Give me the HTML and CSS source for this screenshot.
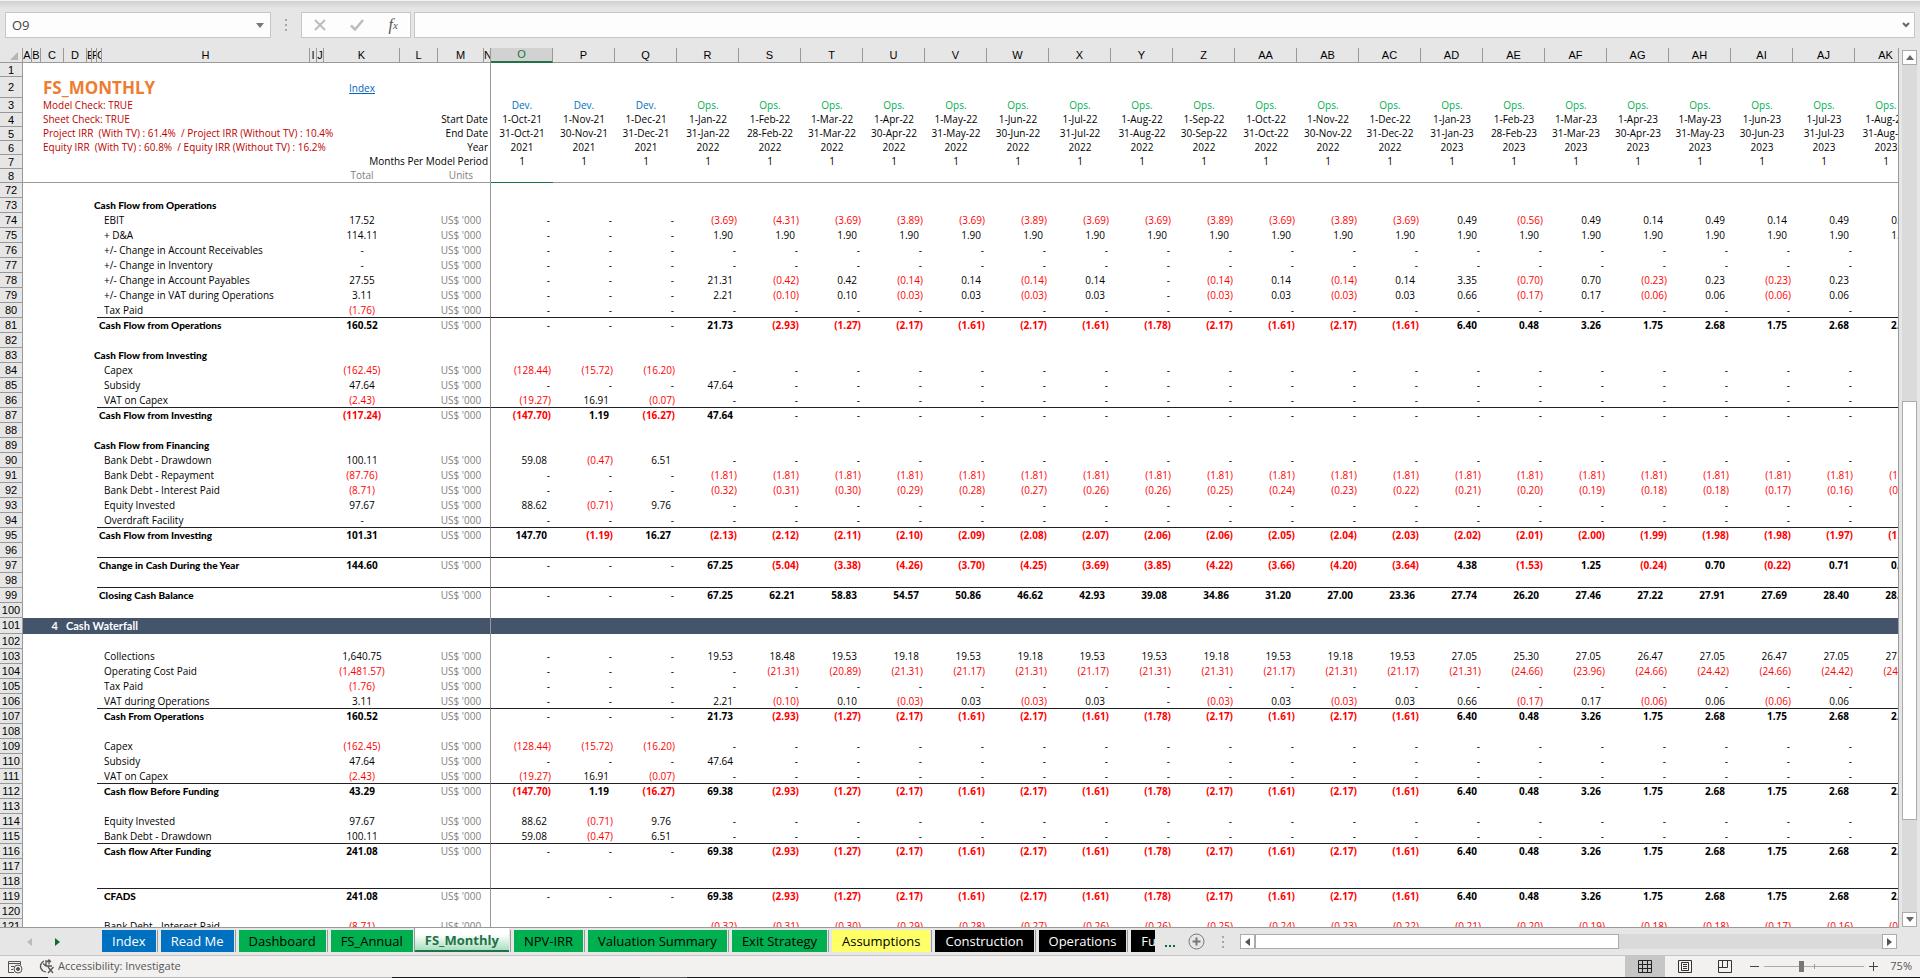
FILE: index.html
```html
<!DOCTYPE html>
<html lang="en">
<head>
    <meta charset="UTF-8">
    <meta name="viewport" content="width=device-width, initial-scale=1.0">
    <title>FS_Monthly</title>
    <link rel="stylesheet" href="styles.css">
</head>
<body>
    <div class="formula-bar">
        <div class="name-box">
            <input type="text" value="O9" aria-label="Name box">
            <svg width="8" height="5" viewBox="0 0 8 5"><path d="M0 0h8L4 5z" fill="#777"/></svg>
        </div>
        <span class="grip"><i></i><i></i><i></i></span>
        <div class="fx-buttons">
            <button type="button" aria-label="Cancel">
                <svg width="12" height="12" viewBox="0 0 12 12"><path d="M1 1l10 10M11 1L1 11" stroke="#bdbdbd" stroke-width="2" fill="none"/></svg>
            </button>
            <button type="button" aria-label="Enter">
                <svg width="14" height="12" viewBox="0 0 14 12"><path d="M1 6.500l4 4L13 1" stroke="#bdbdbd" stroke-width="2.500" fill="none"/></svg>
            </button>
            <button type="button" class="fx" aria-label="Insert function">f<sub>x</sub></button>
        </div>
        <div class="formula-input">
            <input type="text" aria-label="Formula">
            <svg width="8" height="6" viewBox="0 0 8 6"><path d="M1 1l3 3 3-3" stroke="#666" stroke-width="2" fill="none"/></svg>
        </div>
    </div>

    <div class="workspace">
        <div class="sheet">
            <table id="grid">
                <colgroup id="cols"></colgroup>
                <thead id="head"></thead>
                <tbody id="body"></tbody>
            </table>
        </div>
        <div class="vscroll">
            <button type="button" aria-label="Scroll up"><svg width="8" height="5" viewBox="0 0 8 5"><path d="M0 5h8L4 0z" fill="#666"/></svg></button>
            <div class="vtrack"><div class="vthumb"></div></div>
            <button type="button" aria-label="Scroll down"><svg width="8" height="5" viewBox="0 0 8 5"><path d="M0 0h8L4 5z" fill="#666"/></svg></button>
        </div>
    </div>

    <div class="tab-bar">
        <div class="tab-nav">
            <button type="button" aria-label="Previous sheet"><svg width="5" height="8" viewBox="0 0 5 8"><path d="M5 0v8L0 4z" fill="#bbb"/></svg></button>
            <button type="button" aria-label="Next sheet"><svg width="5" height="8" viewBox="0 0 5 8"><path d="M0 0v8l5-4z" fill="#0e6b38"/></svg></button>
        </div>
        <div class="tabs">
            <button type="button" class="tab blue">Index</button>
            <button type="button" class="tab blue">Read Me</button>
            <button type="button" class="tab green">Dashboard</button>
            <button type="button" class="tab green">FS_Annual</button>
            <button type="button" class="tab active">FS_Monthly</button>
            <button type="button" class="tab green">NPV-IRR</button>
            <button type="button" class="tab green">Valuation Summary</button>
            <button type="button" class="tab green">Exit Strategy</button>
            <button type="button" class="tab yellow">Assumptions</button>
            <button type="button" class="tab black">Construction</button>
            <button type="button" class="tab black">Operations</button>
            <button type="button" class="tab black">Funding</button>
        </div>
        <button type="button" class="more" aria-label="More sheets"><i></i><i></i><i></i></button>
        <button type="button" class="add" aria-label="New sheet">
            <svg width="17" height="17" viewBox="0 0 17 17"><circle cx="8.500" cy="8.500" r="7.500" fill="none" stroke="#777"/><path d="M8.500 4.500v8M4.500 8.500h8" stroke="#777" stroke-width="2"/></svg>
        </button>
        <span class="grip"><i></i><i></i><i></i></span>
        <div class="hscroll">
            <button type="button" aria-label="Scroll left"><svg width="5" height="8" viewBox="0 0 5 8"><path d="M5 0v8L0 4z" fill="#555"/></svg></button>
            <div class="htrack"><div class="hthumb"></div></div>
            <button type="button" aria-label="Scroll right"><svg width="5" height="8" viewBox="0 0 5 8"><path d="M0 0v8l5-4z" fill="#555"/></svg></button>
        </div>
    </div>

    <div class="status-bar">
        <svg class="macro" width="15" height="14" viewBox="0 0 15 14" fill="none" stroke="#555"><path d="M6 12.500H.500v-11h12V5M.500 3.500h12M3 6.500h3M3 9.500h2"/><circle cx="10" cy="9" r="4"/><circle cx="10" cy="9" r="1.500" fill="#555"/></svg>
        <svg class="access" width="16" height="15" viewBox="0 0 16 15" fill="none" stroke="#555" stroke-width="1.300"><path d="M5 2C1 4 0 9 4 12l3 1M7 1v6M4 4.500l3 2.500h6M10 1.500v4M9 8l5 6M14.500 8L9 14M8 3l2-2 2 2"/></svg>
        <span class="status-text">Accessibility: Investigate</span>
        <div class="views">
            <button type="button" class="on" aria-label="Normal view"><svg width="14" height="13" viewBox="0 0 14 13" fill="none" stroke="#222"><path d="M.500.500h13v12H.500zM.500 4.500h13M.500 8.500h13M4.500.500v12M9.500.500v12"/></svg></button>
            <button type="button" aria-label="Page layout"><svg width="14" height="13" viewBox="0 0 14 13" fill="none" stroke="#333"><path d="M.500.500h13v12H.500zM3.500 2.500h7v8h-7zM5 4.500h4M5 6.500h4M5 8.500h4"/></svg></button>
            <button type="button" aria-label="Page break preview"><svg width="14" height="13" viewBox="0 0 14 13" fill="none" stroke="#333"><path d="M.500.500h13v12H.500zM.500 7.500h9M4.500.500v7M9.500.500v7"/></svg></button>
        </div>
        <button type="button" class="zoom-step" aria-label="Zoom out"><svg width="9" height="9" viewBox="0 0 9 9"><path d="M0 4.500h9" stroke="#444"/></svg></button>
        <input type="range" class="zoom" min="0" max="100" value="37" aria-label="Zoom">
        <button type="button" class="zoom-step" aria-label="Zoom in"><svg width="9" height="9" viewBox="0 0 9 9"><path d="M0 4.500h9M4.500 0v9" stroke="#444"/></svg></button>
        <span class="zoom-value">75%</span>
    </div>
    <div class="taskbar-edge"></div>

    <script src="script.js"></script>
</body>
</html>
```
FILE: styles.css
```css
* {
    box-sizing: border-box;
}

body {
    margin: 0;
    height: 100vh;
    display: flex;
    flex-direction: column;
    overflow: hidden;
    background: #e6e6e6;
    color: #000;
    font-family: "Open Sans", "Liberation Sans", sans-serif;
    font-size: 10px;
}

button {
    padding: 0;
    border: none;
    background: none;
    font-family: inherit;
    display: flex;
    align-items: center;
    justify-content: center;
}

/* formula bar */
.formula-bar {
    flex: none;
    display: flex;
    height: 48px;
    padding: 12px 5px 10px;
    background: linear-gradient(#f3f3f3 1px, #cfd0cf 1px, #e6e6e6 9px);
}

.name-box,
.fx-buttons,
.formula-input {
    display: flex;
    align-items: center;
    background: #fdfdfd;
    border: 1px solid #c6c6c6;
}

.name-box {
    width: 266px;
    padding-right: 6px;
}

.name-box input,
.formula-input input {
    flex: 1;
    min-width: 0;
    padding: 0 6px;
    border: none;
    outline: none;
    background: none;
    color: #444;
    font-family: inherit;
    font-size: 13px;
}

.grip {
    display: flex;
    flex-direction: column;
    align-items: center;
    justify-content: center;
    gap: 3px;
    width: 30px;
}

.grip i {
    width: 2px;
    height: 2px;
    background: #a6a6a6;
}

.fx-buttons {
    width: 110px;
    justify-content: space-around;
    margin-right: 3px;
}

.fx {
    color: #555;
    font-family: "Liberation Serif", serif;
    font-size: 16px;
    font-style: italic;
}

.fx sub {
    font-size: 11px;
}

.formula-input {
    flex: 1;
    padding-right: 4px;
}

/* grid */
.workspace {
    flex: 1;
    min-height: 0;
    display: flex;
}

.sheet {
    flex: 1;
    min-width: 0;
    overflow: hidden;
    background: #fff;
    border-right: 1px solid #999;
    border-bottom: 1px solid #999;
}

table {
    table-layout: fixed;
    border-collapse: separate;
    border-spacing: 0;
    width: 0;
}

th {
    padding: 0;
    overflow: hidden;
    background: #e6e6e6;
    font-family: "Liberation Sans", sans-serif;
    font-size: 11px;
    font-weight: normal;
    line-height: 13px;
    border-right: 1px solid #999;
    border-bottom: 1px solid #999;
}

thead th {
    height: 15px;
}

thead th.selected {
    background: #d2d2d2;
    color: #217346;
    border-bottom: 2px solid #217346;
}

.corner svg {
    display: block;
    margin: 2px 4px 0 auto;
}

td {
    height: 15px;
    padding: 0 2px;
    line-height: 14px;
    white-space: nowrap;
    text-align: center;
    vertical-align: top;
}

.short td {
    height: 14px;
    line-height: 13px;
}

.short th {
    line-height: 12px;
}

.title td {
    height: 21px;
    line-height: 20px;
    vertical-align: bottom;
}

.band td {
    height: 16px;
    background: #44546a;
    color: #fff;
    font-family: Lato, "Open Sans", sans-serif;
    font-size: 11px;
    font-weight: bold;
    line-height: 16px;
}

td.edge {
    border-right: 1px solid #999;
}

.frozen td {
    border-bottom: 1px solid #999;
}

.frozen td.selected {
    border-bottom-color: #217346;
}

.left {
    text-align: left;
}

.right {
    text-align: right;
}

.indent {
    padding-left: 7px;
}

.band .right {
    padding-right: 6px;
}

h1 {
    margin: 0;
    color: #ed7d31;
    font-size: 17px;
    line-height: 20px;
}

.check {
    color: #c00000;
}

.muted {
    color: #808080;
}

.dev {
    color: #0070c0;
}

.ops {
    color: #00b050;
}

td a {
    color: #0563c1;
}

.num {
    text-align: right;
    padding-right: 6px;
}

.neg {
    color: #f00;
}

.num.neg {
    padding-right: 2px;
}

.num.nil {
    padding-right: 3px;
}

.bold .value {
    font-weight: bold;
}

.bold .nil {
    font-weight: normal;
}

.bold .label {
    font-family: Lato, "Open Sans", sans-serif;
    font-weight: 900;
}

.ruled .line {
    border-bottom: 1px solid #222;
}

/* scroll bars */
.vscroll {
    flex: none;
    display: flex;
    flex-direction: column;
    width: 21px;
    padding: 2px 3px 1px;
}

.vscroll button,
.hscroll button {
    flex: none;
    width: 15px;
    height: 15px;
    background: #fff;
    border: 1px solid #ababab;
}

.vtrack {
    flex: 1;
    display: grid;
    grid-template-rows: 336fr 419fr 92fr;
    background: #dadada;
}

.vthumb {
    grid-row: 2;
    background: #fff;
    border: 1px solid #ababab;
}

/* sheet tabs */
.tab-bar {
    flex: none;
    display: flex;
    align-items: center;
    height: 27px;
    padding-right: 23px;
}

.tab-nav {
    display: flex;
    justify-content: space-between;
    width: 99px;
    padding: 0 39px 0 27px;
}

.tabs {
    display: flex;
    align-items: flex-start;
    width: 1056px;
    height: 27px;
    overflow: hidden;
}

.tab {
    flex: none;
    height: 22px;
    margin: 2px 2px 0 0;
    padding: 0 10px 1px;
    border-left: 3px solid #e6e6e6;
    font-size: 13px;
    box-shadow: -1px 0 #999;
    color: #000;
}

.blue {
    background: #0070c0;
    color: #fff;
}

.green {
    background: #00b050;
}

.yellow {
    background: #ff6;
}

.black {
    background: #000;
    color: #fff;
}

.active {
    height: 24px;
    margin-top: 0;
    padding-top: 2px;
    padding-bottom: 0;
    border-left: none;
    border-bottom: 2px solid #217346;
    background: linear-gradient(#fff 30%, #a9dfbf);
    color: #217346;
    font-weight: bold;
}

.more {
    gap: 2px;
    width: 29px;
    height: 10px;
    align-items: flex-end;
}

.more i {
    width: 2px;
    height: 2px;
    background: #0e6b38;
}

.add {
    width: 24px;
}

.hscroll {
    flex: 1;
    display: flex;
    margin-left: 2px;
}

.htrack {
    flex: 1;
    background: #dadada;
}

.hthumb {
    width: 58%;
    height: 15px;
    background: #fff;
    border: 1px solid #ababab;
}

/* status bar */
.status-bar {
    flex: none;
    display: flex;
    align-items: center;
    height: 22px;
    padding: 0 8px;
    background: #f3f1f0;
    border-top: 1px solid #c6c6c6;
    color: #555;
    font-size: 11px;
}

.status-text {
    padding-bottom: 2px;
}

.access {
    margin: 0 3px 0 16px;
}

.views {
    display: flex;
    margin-left: auto;
    margin-right: 5px;
}

.views button {
    width: 40px;
    height: 21px;
}

.views .on {
    background: #c6c6c6;
}

.zoom-step {
    width: 9px;
}

.zoom {
    appearance: none;
    width: 100px;
    height: 11px;
    margin: 0 5px;
    background: linear-gradient(#999, #999) 50% 50% / 1px 5px no-repeat, linear-gradient(#aaa, #aaa) 0 50% / 100% 1px no-repeat;
}

.zoom::-webkit-slider-thumb {
    appearance: none;
    width: 5px;
    height: 11px;
    background: #777;
}

.zoom-value {
    width: 34px;
    padding-bottom: 2px;
    text-align: right;
}

.taskbar-edge {
    flex: none;
    height: 1px;
    background: linear-gradient(90deg, #1a1a1a 48px, #b5b5b5 48px, #b5b5b5 392px, #1a1a1a 392px, #1a1a1a 640px, #555 640px, #555 687px, #1a1a1a 687px);
}
```
FILE: script.js
```js
const columns = [
    ["A", 9], ["B", 9], ["C", 23], ["D", 23], ["E", 5], ["F", 5], ["G", 5], ["H", 208],
    ["I", 7], ["J", 7], ["K", 76], ["L", 38], ["M", 46], ["N", 7]
];
const periods = "O P Q R S T U V W X Y Z AA AB AC AD AE AF AG AH AI AJ AK".split(" ");
periods.forEach(name => columns.push([name, 62]));

const months = ["Jan", "Feb", "Mar", "Apr", "May", "Jun", "Jul", "Aug", "Sep", "Oct", "Nov", "Dec"];
const dates = periods.map((name, i) => {
    const month = (9 + i) % 12;
    const year = 2021 + Math.floor((9 + i) / 12);
    return { month: months[month], year: year, last: new Date(year, month + 1, 0).getDate() };
});

const none = "- ".repeat(23);
const dash20 = " -".repeat(20);
const cashOps = "- - - 21.73 (2.93) (1.27) (2.17) (1.61) (2.17) (1.61) (1.78) (2.17) (1.61) (2.17) (1.61) 6.40 0.48 3.26 1.75 2.68 1.75 2.68 2.51";
const cashFunded = cashOps.replace("21.73", "69.38");
const vat = "- - - 2.21 (0.10) 0.10 (0.03) 0.03 (0.03) 0.03 - (0.03) 0.03 (0.03) 0.03 0.66 (0.17) 0.17 (0.06) 0.06 (0.06) 0.06 -";
const interest = "- - - (0.32) (0.31) (0.30) (0.29) (0.28) (0.27) (0.26) (0.26) (0.25) (0.24) (0.23) (0.22) (0.21) (0.20) (0.19) (0.18) (0.18) (0.17) (0.16) (0.15)";
const capex = "(128.44) (15.72) (16.20)" + dash20;
const subsidy = "- - - 47.64" + " -".repeat(19);
const vatCapex = "(19.27) 16.91 (0.07)" + dash20;
const equity = "88.62 (0.71) 9.76" + dash20;
const drawdown = "59.08 (0.47) 6.51" + dash20;

// row number, style, label, total, values
const rows = [
    [72],
    [73, "heading", "Cash Flow from Operations"],
    [74, "", "EBIT", "17.52", "- - - (3.69) (4.31) (3.69) (3.89) (3.69) (3.89) (3.69) (3.69) (3.89) (3.69) (3.89) (3.69) 0.49 (0.56) 0.49 0.14 0.49 0.14 0.49 0.49"],
    [75, "", "+ D&A", "114.11", "- - -" + " 1.90".repeat(20)],
    [76, "", "+/- Change in Account Receivables", "-", none],
    [77, "", "+/- Change in Inventory", "-", none],
    [78, "", "+/- Change in Account Payables", "27.55", "- - - 21.31 (0.42) 0.42 (0.14) 0.14 (0.14) 0.14 - (0.14) 0.14 (0.14) 0.14 3.35 (0.70) 0.70 (0.23) 0.23 (0.23) 0.23 -"],
    [79, "", "+/- Change in VAT during Operations", "3.11", vat],
    [80, "ruled", "Tax Paid", "(1.76)", none],
    [81, "total", "Cash Flow from Operations", "160.52", cashOps],
    [82],
    [83, "heading", "Cash Flow from Investing"],
    [84, "", "Capex", "(162.45)", capex],
    [85, "", "Subsidy", "47.64", subsidy],
    [86, "ruled", "VAT on Capex", "(2.43)", vatCapex],
    [87, "total", "Cash Flow from Investing", "(117.24)", "(147.70) 1.19 (16.27) 47.64" + " -".repeat(19)],
    [88],
    [89, "heading", "Cash Flow from Financing"],
    [90, "", "Bank Debt - Drawdown", "100.11", drawdown],
    [91, "", "Bank Debt - Repayment", "(87.76)", "- - -" + " (1.81)".repeat(20)],
    [92, "", "Bank Debt - Interest Paid", "(8.71)", interest],
    [93, "", "Equity Invested", "97.67", equity],
    [94, "ruled", "Overdraft Facility", "-", none],
    [95, "total", "Cash Flow from Investing", "101.31", "147.70 (1.19) 16.27 (2.13) (2.12) (2.11) (2.10) (2.09) (2.08) (2.07) (2.06) (2.06) (2.05) (2.04) (2.03) (2.02) (2.01) (2.00) (1.99) (1.98) (1.98) (1.97) (1.96)"],
    [96, "ruled"],
    [97, "total", "Change in Cash During the Year", "144.60", "- - - 67.25 (5.04) (3.38) (4.26) (3.70) (4.25) (3.69) (3.85) (4.22) (3.66) (4.20) (3.64) 4.38 (1.53) 1.25 (0.24) 0.70 (0.22) 0.71 0.54"],
    [98, "ruled"],
    [99, "total", "Closing Cash Balance", "", "- - - 67.25 62.21 58.83 54.57 50.86 46.62 42.93 39.08 34.86 31.20 27.00 23.36 27.74 26.20 27.46 27.22 27.91 27.69 28.40 28.94"],
    [100],
    [101, "band", "Cash Waterfall"],
    [102],
    [103, "", "Collections", "1,640.75", "- - - 19.53 18.48 19.53 19.18 19.53 19.18 19.53 19.53 19.18 19.53 19.18 19.53 27.05 25.30 27.05 26.47 27.05 26.47 27.05 27.05"],
    [104, "", "Operating Cost Paid", "(1,481.57)", "- - - - (21.31) (20.89) (21.31) (21.17) (21.31) (21.17) (21.31) (21.31) (21.17) (21.31) (21.17) (21.31) (24.66) (23.96) (24.66) (24.42) (24.66) (24.42) (24.66)"],
    [105, "", "Tax Paid", "(1.76)", none],
    [106, "ruled", "VAT during Operations", "3.11", vat],
    [107, "subtotal", "Cash From Operations", "160.52", cashOps],
    [108],
    [109, "", "Capex", "(162.45)", capex],
    [110, "", "Subsidy", "47.64", subsidy],
    [111, "ruled", "VAT on Capex", "(2.43)", vatCapex],
    [112, "subtotal", "Cash flow Before Funding", "43.29", cashFunded.replace("- - -", "(147.70) 1.19 (16.27)")],
    [113],
    [114, "", "Equity Invested", "97.67", equity],
    [115, "ruled", "Bank Debt - Drawdown", "100.11", drawdown],
    [116, "subtotal", "Cash flow After Funding", "241.08", cashFunded],
    [117],
    [118, "ruled"],
    [119, "subtotal", "CFADS", "241.08", cashFunded],
    [120],
    [121, "", "Bank Debt - Interest Paid", "(8.71)", interest]
];

function sign(value) {
    if (value === "-") return "nil";
    return value.startsWith("(") ? "neg" : "";
}

function cells(render) {
    return dates.map(render).join("");
}

function headerRow(number, cls, left, render) {
    return `<tr class="${cls}"><th scope="row">${number}</th>${left}${cells(render)}</tr>`;
}

function check(text) {
    return `<td colspan="2"></td><td colspan="8" class="left check">${text}</td>`;
}

function caption(text) {
    return `<td colspan="4" class="right edge">${text}</td>`;
}

function dataRow([number, style = "", label = "", total = "", values = ""]) {
    const th = `<th scope="row">${number}</th>`;
    if (style === "band") {
        return `<tr class="band">${th}<td colspan="2"></td><td class="right">4</td><td colspan="10" class="left">${label}</td><td class="edge"></td>${cells(() => "<td></td>")}</tr>`;
    }
    if (style === "heading") {
        return `<tr class="bold">${th}<td colspan="5"></td><td colspan="8" class="left label">${label}</td><td class="edge"></td>${cells(() => "<td></td>")}</tr>`;
    }
    const list = values.trim().split(" ");
    const bold = style.endsWith("total") ? "bold" : "";
    const indent = style === "total" ? "" : "indent";
    const units = label ? "US$ '000" : "";
    return `<tr class="${bold} ${style}">${th}<td colspan="6"></td>
        <td colspan="4" class="left label line ${indent}">${label.replace("&", "&amp;")}</td>
        <td class="value line ${sign(total)}">${total}</td>
        <td class="line"></td><td class="muted line">${units}</td><td class="edge line"></td>
        ${cells((d, i) => `<td class="num value line ${sign(list[i] || "")}">${list[i] || ""}</td>`)}</tr>`;
}

document.getElementById("cols").innerHTML = `<col style="width:23px">` +
    columns.map(c => `<col style="width:${c[1]}px">`).join("");

document.getElementById("head").innerHTML = `<tr><th class="corner"><svg width="8" height="8" viewBox="0 0 8 8"><path d="M8 0v8H0z" fill="#b5b5b5"/></svg></th>` +
    columns.map(c => `<th scope="col" class="${c[0] === "O" ? "selected" : ""}">${c[0]}</th>`).join("") + "</tr>";

document.getElementById("body").innerHTML =
    headerRow(1, "short", `<td colspan="13"></td><td class="edge"></td>`, () => "<td></td>") +
    headerRow(2, "title", `<td colspan="2"></td><td colspan="8" class="left"><h1>FS_MONTHLY</h1></td><td><a href="#">Index</a></td><td colspan="3" class="edge"></td>`, () => "<td></td>") +
    headerRow(3, "", check("Model Check: TRUE") + caption(""), (d, i) => i < 3 ? `<td class="dev">Dev.</td>` : `<td class="ops">Ops.</td>`) +
    headerRow(4, "short", check("Sheet Check: TRUE") + caption("Start Date"), d => `<td>1-${d.month}-${d.year % 100}</td>`) +
    headerRow(5, "short", check("Project IRR &nbsp;(With TV) : 61.4% &nbsp;/ Project IRR (Without TV) : 10.4%") + caption("End Date"), d => `<td>${d.last}-${d.month}-${d.year % 100}</td>`) +
    headerRow(6, "short", check("Equity IRR &nbsp;(With TV) : 60.8% &nbsp;/ Equity IRR (Without TV) : 16.2%") + caption("Year"), d => `<td>${d.year}</td>`) +
    headerRow(7, "short", check("") + caption("Months Per Model Period"), () => "<td>1</td>") +
    headerRow(8, "short frozen", `<td colspan="10"></td><td class="muted">Total</td><td></td><td class="muted">Units</td><td class="edge"></td>`, (d, i) => `<td class="${i === 0 ? "selected" : ""}"></td>`) +
    rows.map(dataRow).join("");
```
